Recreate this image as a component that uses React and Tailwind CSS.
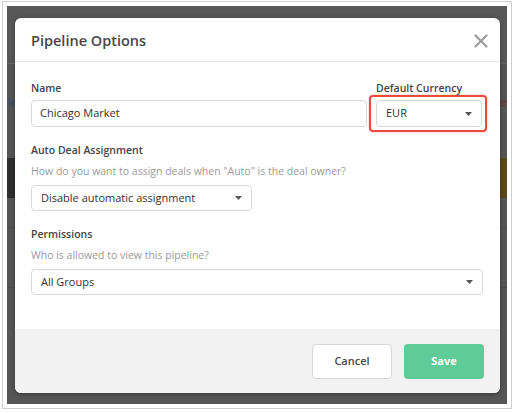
import React from 'react';

const Caret = () => (
  <svg width="7" height="4" viewBox="0 0 7 4" className="shrink-0">
    <path d="M0 0 L7 0 L3.5 4 Z" fill="#555" />
  </svg>
);

const SelectBox = ({ value, className }) => (
  <div
    className={`h-[26px] flex items-center justify-between pl-[9px] pr-[9px] bg-white border border-[#d9d9d9] rounded-[4px] text-[11px] text-[#333] ${className}`}
  >
    <span>{value}</span>
    <Caret />
  </div>
);

const Label = ({ children, className = '' }) => (
  <div className={`text-[10.5px] leading-[15px] font-semibold text-[#454545] ${className}`}>{children}</div>
);

const Help = ({ children }) => (
  <div className="mt-[6px] text-[10.5px] leading-[15px] text-[#9a9a9a]">{children}</div>
);

const App = () => {
  return (
    <div className="w-[514px] h-[413px] bg-white pt-[1px] pl-[2px] font-['Open_Sans',sans-serif]">
      <div className="w-[510px] h-[408px] border border-[#cfcfcf] bg-white p-[4px]">
        {/* Dimmed page behind the dialog */}
        <div className="relative w-full h-full bg-[#555555] flex flex-col overflow-hidden">
          <div className="h-[58px] bg-[#585858] border-b border-[#666]"></div>
          <div className="h-[94px] flex justify-between px-[1px] pt-[30px] text-[11px]">
            <span className="text-[#2a4f6e]">le</span>
            <span className="text-[#6e2a22]">re</span>
          </div>
          <div className="h-[40px] flex">
            <div className="w-[250px] bg-[#2e2e2e]"></div>
            <div className="flex-1 bg-[#5a4a18]"></div>
          </div>
          <div className="h-[30px] border-b border-[#4c4c4c]"></div>
          <div className="h-[60px] border-b border-[#4c4c4c]"></div>
          <div className="flex-1"></div>

          {/* Dialog */}
          <div className="absolute left-[8px] top-[12px] w-[485px] h-[375px] bg-white rounded-[6px] shadow-[0_1px_4px_rgba(0,0,0,0.35)] flex flex-col">
            <div className="h-[44px] shrink-0 border-b border-[#e6e6e6] flex items-center justify-between pt-[3px] pl-[16px] pr-[12px]">
              <h2 className="text-[14.5px] font-semibold text-[#474747] leading-none">Pipeline Options</h2>
              <svg width="14" height="14" viewBox="0 0 14 14">
                <path d="M1.5 1.5 L12.5 12.5 M12.5 1.5 L1.5 12.5" stroke="#9b9b9b" strokeWidth="2.2" strokeLinecap="round" />
              </svg>
            </div>

            <div className="flex-1 pt-[19px] px-[16px]">
              <div className="flex gap-[9px]">
                <div className="w-[336px]">
                  <Label className="mb-[4px]">Name</Label>
                  <div className="h-[27px] flex items-center px-[8px] border border-[#d9d9d9] rounded-[4px] text-[11px] text-[#333]">
                    Chicago Market
                  </div>
                </div>
                <div className="w-[106px]">
                  <Label className="mb-[4px]">Default Currency</Label>
                  <div className="relative">
                    <SelectBox value="EUR" className="h-[27px] pl-[8px]" />
                    <div className="absolute left-[-7px] right-[-5px] top-[-5px] bottom-[-5px] border-2 border-[#ea4a3f] rounded-[4px] shadow-[0_0_2px_rgba(234,74,63,0.5)]"></div>
                  </div>
                </div>
              </div>

              <Label className="mt-[16px]">Auto Deal Assignment</Label>
              <Help>How do you want to assign deals when "Auto" is the deal owner?</Help>
              <SelectBox value="Disable automatic assignment" className="mt-[6px] w-[221px]" />

              <Label className="mt-[16px]">Permissions</Label>
              <Help>Who is allowed to view this pipeline?</Help>
              <SelectBox value="All Groups" className="mt-[6px] w-[452px]" />
            </div>

            <div className="h-[64px] shrink-0 bg-[#f2f2f2] rounded-b-[6px] flex items-center justify-end gap-[12px] px-[16px]">
              <button className="w-[80px] h-[35px] bg-white border border-[#d6d6d6] rounded-[4px] text-[11px] font-semibold text-[#4a4a4a]">
                Cancel
              </button>
              <button className="w-[80px] h-[35px] bg-[#5fcb97] rounded-[4px] text-[11px] font-bold text-white">
                Save
              </button>
            </div>
          </div>
        </div>
      </div>
    </div>
  );
};

export default App;
